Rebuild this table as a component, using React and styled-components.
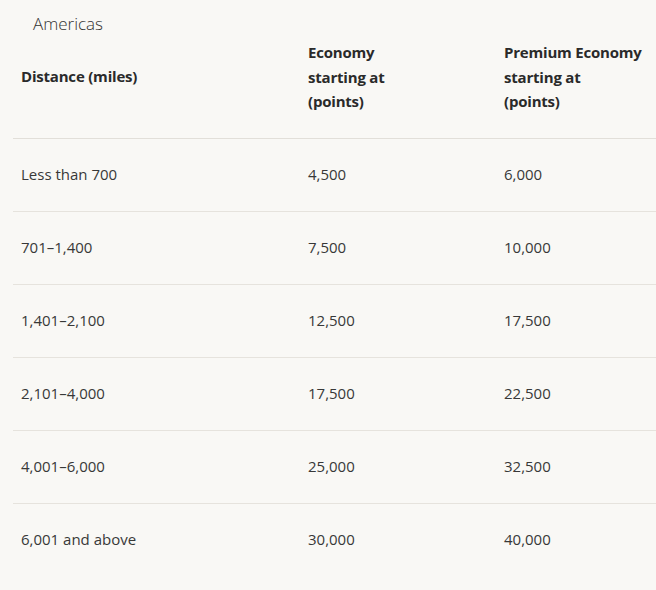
import React from 'react';
import styled, { createGlobalStyle } from 'styled-components';

const GlobalStyle = createGlobalStyle`
  html, body {
    margin: 0;
    padding: 0;
    background: #f9f8f5;
  }
  body {
    font-family: 'Open Sans', 'Liberation Sans', sans-serif;
    color: #2b2b2b;
  }
`;

const Page = styled.div`
  padding-left: 13px;
`;

const Table = styled.table`
  border-collapse: collapse;
  width: 643px;
  table-layout: fixed;
`;

const Caption = styled.caption`
  text-align: left;
  padding: 10px 0 0 20px;
  height: 30px;
  box-sizing: border-box;
  font-size: 17px;
  font-weight: 300;
  color: #333;
  line-height: 28px;
`;

const HeadCell = styled.th`
  text-align: left;
  vertical-align: top;
  padding: 10px 8px 24px;
  font-size: 15px;
  font-weight: 700;
  line-height: 24.5px;
  letter-spacing: -0.2px;
  color: #2a2a2a;
  border-bottom: 1px solid #e2dfd9;
`;

const MidHead = styled(HeadCell)`
  vertical-align: middle;
  padding-bottom: 26px;
`;

const Cell = styled.td`
  height: 70px;
  padding: 0 8px 2px;
  vertical-align: middle;
  font-size: 15px;
  font-weight: 400;
  line-height: 22px;
  color: #383838;
  border-bottom: ${p => (p.$last ? 'none' : '1px solid #e6e3dd')};
`;

const rows = [
  ['Less than 700', '4,500', '6,000'],
  ['701\u20131,400', '7,500', '10,000'],
  ['1,401\u20132,100', '12,500', '17,500'],
  ['2,101\u20134,000', '17,500', '22,500'],
  ['4,001\u20136,000', '25,000', '32,500'],
  ['6,001 and above', '30,000', '40,000'],
];

export default function App() {
  return (
    <Page>
      <GlobalStyle />
      <Table>
        <Caption>Americas</Caption>
        <colgroup>
          <col style={{ width: 287 }} />
          <col style={{ width: 196 }} />
          <col style={{ width: 160 }} />
        </colgroup>
        <thead>
          <tr>
            <MidHead>Distance (miles)</MidHead>
            <HeadCell>
              Economy
              <br />
              starting at
              <br />
              (points)
            </HeadCell>
            <HeadCell>
              Premium Economy
              <br />
              starting at
              <br />
              (points)
            </HeadCell>
          </tr>
        </thead>
        <tbody>
          {rows.map((r, i) => (
            <tr key={r[0]}>
              {r.map((v, j) => (
                <Cell key={j} $last={i === rows.length - 1}>
                  {v}
                </Cell>
              ))}
            </tr>
          ))}
        </tbody>
      </Table>
    </Page>
  );
}
